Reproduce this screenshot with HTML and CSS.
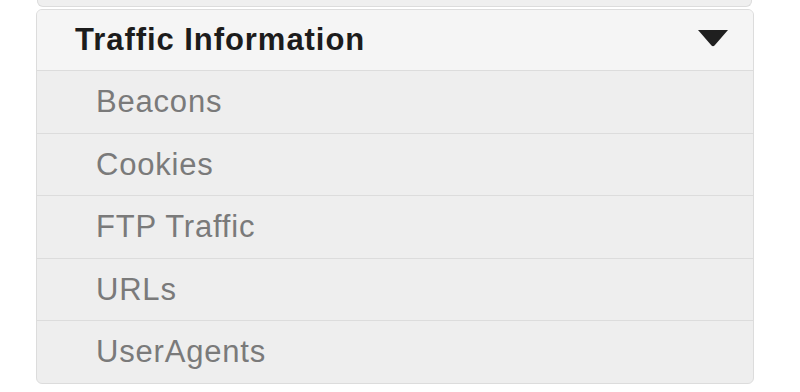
FILE: index.html
```html
<!DOCTYPE html>
<html lang="en">
<head>
  <meta charset="UTF-8">
  <meta name="viewport" content="width=device-width, initial-scale=1.0">
  <title>Traffic Information</title>
  <link rel="stylesheet" href="styles.css">
</head>
<body>

  <div class="menu">
    <!-- previous group, scrolled mostly out of view -->
    <div class="panel-prev"></div>

    <div class="panel">
      <div class="panel-heading">
        <span class="panel-title">Traffic Information</span>
        <svg class="caret" width="32" height="18" viewBox="0 0 32 18">
          <path d="M1 1 H31 L17.5 16.5 Q16 18 14.5 16.5 Z" fill="#1f1f1f"/>
        </svg>
      </div>
      <ul class="panel-list">
        <li>Beacons</li>
        <li>Cookies</li>
        <li>FTP Traffic</li>
        <li>URLs</li>
        <li>UserAgents</li>
      </ul>
    </div>
  </div>

</body>
</html>
```

FILE: styles.css
```css
/* Sidebar accordion menu */
body {
  margin: 0;
  background-color: #fff;
  font-family: "Liberation Sans", Arial, sans-serif;
}
.menu {
  width: 718px;
  margin-left: 36px;
}
.panel-prev {
  height: 6px;
  margin: 0 2px 0 1px;
  background-color: #efefef;
  border: 1px solid #dcdcdc;
  border-top: none;
  border-radius: 0 0 6px 6px;
}
.panel {
  margin-top: 2px;
  background-color: #eee;
  border: 1px solid #dcdcdc;
  border-radius: 6px;
  overflow: hidden;
}
.panel-heading {
  height: 60px;
  display: flex;
  align-items: center;
  justify-content: space-between;
  padding: 0 24px 0 38px;
  background-color: #f5f5f5;
  border-bottom: 1px solid #dcdcdc;
}
.panel-title {
  font-size: 31px;
  font-weight: bold;
  letter-spacing: 0.95px;
  color: #1c1c1c;
}
.caret {
  margin-top: -4px;
}
.panel-list {
  list-style: none;
  margin: 0;
  padding: 0;
}
.panel-list li {
  height: 61.6px;
  line-height: 61.6px;
  padding-left: 59px;
  font-size: 31px;
  letter-spacing: 0.8px;
  color: #7a7a7a;
  border-top: 1px solid #dcdcdc;
}
.panel-list li:first-child {
  border-top: none;
}
```
